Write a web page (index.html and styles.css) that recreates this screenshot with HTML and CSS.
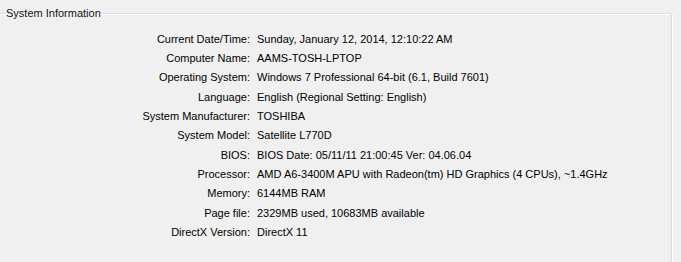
FILE: index.html
```html
<!DOCTYPE html>
<html>
<head>
  <title>System Information</title>
  <link rel="stylesheet" href="styles.css">
</head>
<body>

  <fieldset class="group">
    <legend class="group-title">System Information</legend>

    <div class="info-grid">
      <div class="info-label">Current Date/Time:</div>
      <div class="info-value">Sunday, January 12, 2014, 12:10:22 AM</div>

      <div class="info-label">Computer Name:</div>
      <div class="info-value">AAMS-TOSH-LPTOP</div>

      <div class="info-label">Operating System:</div>
      <div class="info-value">Windows 7 Professional 64-bit (6.1, Build 7601)</div>

      <div class="info-label">Language:</div>
      <div class="info-value">English (Regional Setting: English)</div>

      <div class="info-label">System Manufacturer:</div>
      <div class="info-value">TOSHIBA</div>

      <div class="info-label">System Model:</div>
      <div class="info-value">Satellite L770D</div>

      <div class="info-label">BIOS:</div>
      <div class="info-value">BIOS Date: 05/11/11 21:00:45 Ver: 04.06.04</div>

      <div class="info-label">Processor:</div>
      <div class="info-value">AMD A6-3400M APU with Radeon(tm) HD Graphics (4 CPUs), ~1.4GHz</div>

      <div class="info-label">Memory:</div>
      <div class="info-value">6144MB RAM</div>

      <div class="info-label">Page file:</div>
      <div class="info-value">2329MB used, 10683MB available</div>

      <div class="info-label">DirectX Version:</div>
      <div class="info-value">DirectX 11</div>
    </div>
  </fieldset>

</body>
</html>
```

FILE: styles.css
```css
body {
  font-family: "Liberation Sans", Arial, sans-serif;
  font-size: 11px;
  background-color: #f0f0f0;
  color: #000;
  margin: 0;
  padding: 7px 9px 0 0;
  overflow: hidden;
}
.group {
  margin: 0;
  padding: 0;
  border: 1px solid #d5dfe5;
  border-left: none;
  border-bottom: none;
  border-top-right-radius: 3px;
  box-shadow: inset 0 1px 0 #fff, 1px 0 0 #fff;
  height: 255px;
  box-sizing: border-box;
}
.group-title {
  margin-left: 5px;
  padding: 0 1px;
  line-height: 13px;
  color: #111;
}
.info-grid {
  display: grid;
  grid-template-columns: 250px auto;
  grid-auto-rows: 19.33px;
  column-gap: 7px;
  padding-top: 9px;
  align-items: center;
}
.info-label {
  text-align: right;
  white-space: nowrap;
}
.info-value {
  white-space: nowrap;
}
```
